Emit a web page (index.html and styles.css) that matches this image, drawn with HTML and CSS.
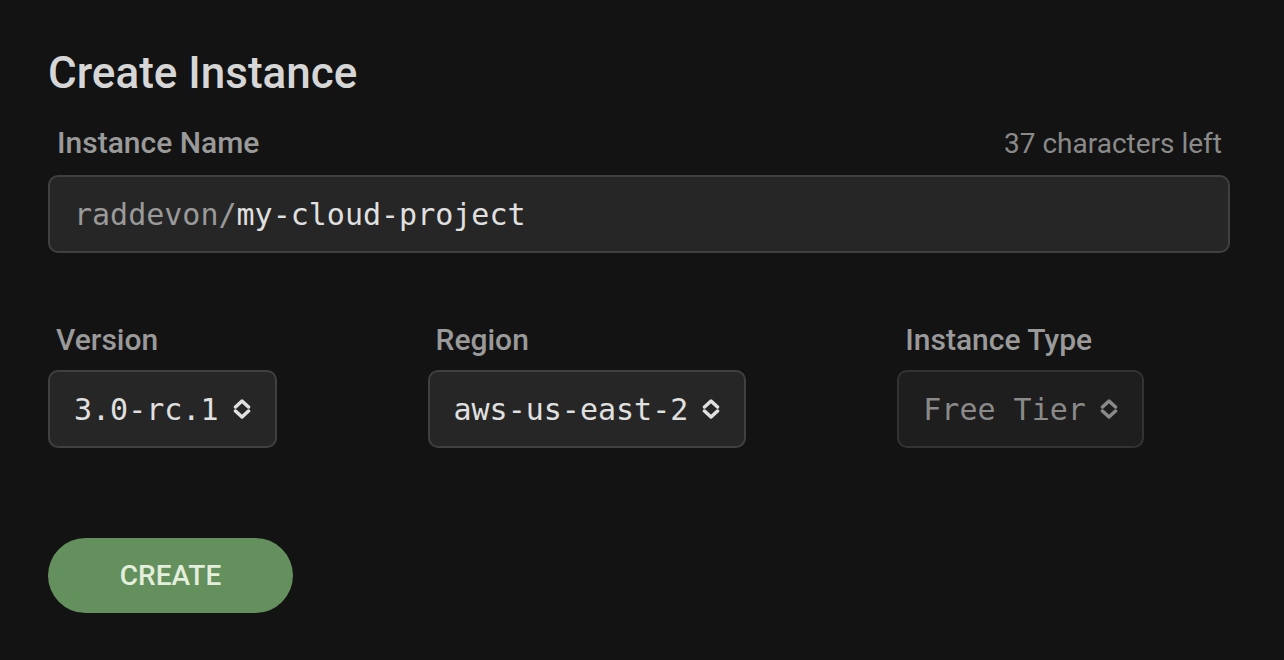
FILE: index.html
```html
<!DOCTYPE html>
<html>
<head>
<meta charset="utf-8">
<link rel="stylesheet" href="styles.css">
</head>
<body>
<main class="page">
  <h1 class="title">Create Instance</h1>
  <div class="field-head">
    <span class="label">Instance Name</span>
    <span class="counter">37 characters left</span>
  </div>
  <div class="text-input"><span class="prefix">raddevon/</span><span class="value">my-cloud-project</span></div>

  <div class="row">
    <div class="field">
      <span class="label">Version</span>
      <div class="select"><span>3.0-rc.1</span>
        <svg class="arrows" viewBox="0 0 18 20"><path d="M2.5 8 L9 2 L15.5 8 M2.5 12 L9 18 L15.5 12"/></svg>
      </div>
    </div>
    <div class="field">
      <span class="label">Region</span>
      <div class="select"><span>aws-us-east-2</span>
        <svg class="arrows" viewBox="0 0 18 20"><path d="M2.5 8 L9 2 L15.5 8 M2.5 12 L9 18 L15.5 12"/></svg>
      </div>
    </div>
    <div class="field">
      <span class="label">Instance Type</span>
      <div class="select disabled"><span>Free Tier</span>
        <svg class="arrows" viewBox="0 0 18 20"><path d="M2.5 8 L9 2 L15.5 8 M2.5 12 L9 18 L15.5 12"/></svg>
      </div>
    </div>
  </div>

  <button class="create">CREATE</button>
</main>
</body>
</html>
```
FILE: styles.css
```css
html, body {
  margin: 0;
  padding: 0;
  background: #131313;
}
body {
  font-family: Roboto, "Noto Sans", sans-serif;
  width: 1284px;
  height: 660px;
  overflow: hidden;
}
.page {
  padding: 47px 54px 0 48px;
}
.title {
  margin: 0;
  font-size: 44px;
  line-height: 52px;
  font-weight: 500;
  color: #d6d6d6;
}
.field-head {
  display: flex;
  justify-content: space-between;
  align-items: baseline;
  margin-top: 27px;
  padding: 0 8px 0 9px;
}
.label {
  display: block;
  font-size: 30px;
  line-height: 34px;
  font-weight: 500;
  color: #9a9a9a;
  padding-left: 8px;
}
.field-head .label {
  padding-left: 0;
}
.counter {
  font-size: 28px;
  line-height: 34px;
  color: #8a8a8a;
}
.text-input {
  margin-top: 14px;
  height: 74px;
  border: 2px solid #404040;
  border-radius: 10px;
  background: #262626;
  display: flex;
  align-items: center;
  padding: 0 24px;
  font-family: "DejaVu Sans Mono", "Liberation Mono", monospace;
  font-size: 30px;
}
.prefix { color: #9a9a9a; }
.value { color: #e0e0e0; }
.row {
  display: flex;
  gap: 151px;
  margin-top: 70px;
}
.field {
  display: flex;
  flex-direction: column;
  gap: 13px;
  align-items: flex-start;
}
.select {
  height: 74px;
  border: 2px solid #404040;
  border-radius: 10px;
  background: #262626;
  display: flex;
  align-items: center;
  gap: 14px;
  padding: 0 24px 0 24px;
  font-family: "DejaVu Sans Mono", "Liberation Mono", monospace;
  font-size: 30px;
  color: #e0e0e0;
}
.arrows {
  width: 18px;
  height: 20px;
  fill: none;
  stroke: #e0e0e0;
  stroke-width: 3.5;
  stroke-linecap: round;
  stroke-linejoin: round;
}
.select.disabled {
  background: #1e1e1e;
  border-color: #333333;
  color: #8a8a8a;
}
.select.disabled .arrows {
  stroke: #8a8a8a;
}
.create {
  display: block;
  margin-top: 90px;
  width: 245px;
  height: 75px;
  border: none;
  border-radius: 38px;
  background: #64905d;
  color: #e3eedc;
  font-family: Roboto, sans-serif;
  font-size: 28px;
  font-weight: 500;
  padding: 0;
}
```
